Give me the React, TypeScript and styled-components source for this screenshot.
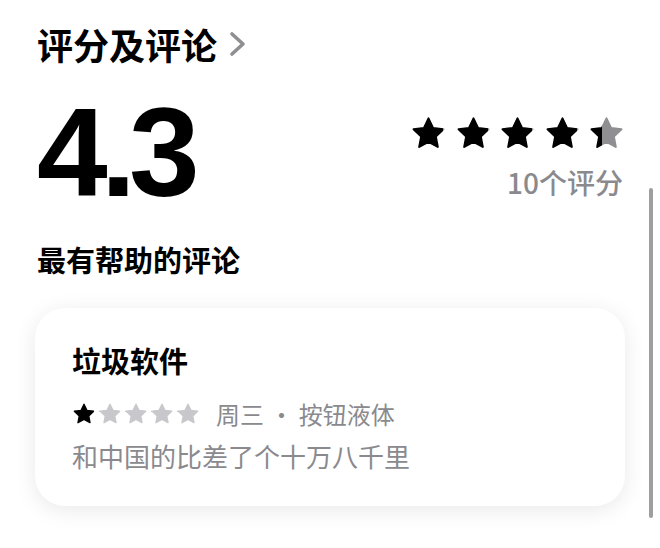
import React from "react";
import styled, { createGlobalStyle } from "styled-components";

const GlobalStyle = createGlobalStyle`
  html, body {
    margin: 0;
    padding: 0;
    background: #fff;
  }
  body {
    font-family: "Noto Sans CJK SC", "Noto Sans", sans-serif;
    color: #000;
  }
`;

const Page = styled.div`
  position: relative;
  width: 660px;
  height: 548px;
  overflow: hidden;
  box-sizing: border-box;
  padding: 22px 37px 0;
`;

const Header = styled.div`
  display: flex;
  align-items: center;
  gap: 12px;
  height: 44px;
`;

const Title = styled.h1`
  margin: 0;
  font-size: 36px;
  line-height: 44px;
  font-weight: 700;
`;

const Summary = styled.div`
  display: flex;
  justify-content: space-between;
  align-items: flex-start;
  margin-top: 23px;
`;

const BigScore = styled.div`
  font-family: "Liberation Sans", Arial, sans-serif;
  font-weight: 700;
  font-size: 127px;
  line-height: 1;
  letter-spacing: -7px;
`;

const RatingBox = styled.div`
  display: flex;
  flex-direction: column;
  align-items: flex-end;
  padding-top: 26px;
  margin-right: -2px;
`;

const StarRow = styled.div<{ $gap: number }>`
  display: flex;
  align-items: center;
  gap: ${(p) => p.$gap}px;
`;

const CountText = styled.div`
  margin-top: 15px;
  margin-right: 2px;
  font-size: 28px;
  line-height: 30px;
  font-weight: 500;
  color: #8a8a8e;
`;

const SectionTitle = styled.h2`
  margin: 25px 0 0;
  font-size: 29px;
  line-height: 36px;
  font-weight: 700;
`;

const Card = styled.div`
  margin-top: 31px;
  width: 590px;
  margin-left: -2px;
  box-sizing: border-box;
  padding: 34px 37px 34px;
  border-radius: 30px;
  background: #fff;
  box-shadow: 0 4px 22px rgba(0, 0, 0, 0.09);
`;

const ReviewTitle = styled.div`
  font-size: 29px;
  line-height: 36px;
  font-weight: 700;
`;

const MetaRow = styled.div`
  display: flex;
  align-items: center;
  gap: 16px;
  margin-top: 20px;
  height: 32px;
`;

const MetaText = styled.span`
  font-size: 24px;
  line-height: 32px;
  color: #8a8a8e;
`;

const Body = styled.div`
  margin-top: 10px;
  font-size: 26px;
  line-height: 32px;
  color: #8a8a8e;
`;

const ScrollIndicator = styled.div`
  position: absolute;
  left: 649px;
  top: 188px;
  width: 4px;
  height: 330px;
  border-radius: 2px;
  background: #9e9e9e;
`;

const STAR_PATH =
  "M12 2.2l2.95 6.2 6.75.85-4.95 4.7 1.28 6.75L12 17.4l-6.03 3.3 1.28-6.75-4.95-4.7 6.75-.85z";

type StarProps = { size: number; fill: number; on: string; off: string; id: string };

const Star = ({ size, fill, on, off, id }: StarProps) => (
  <svg width={size} height={size} viewBox="0 0 24 24">
    <defs>
      <linearGradient id={id} x1="0" x2="1" y1="0" y2="0">
        <stop offset={fill} stopColor={on} />
        <stop offset={fill} stopColor={off} />
      </linearGradient>
    </defs>
    <path d={STAR_PATH} fill={`url(#${id})`} stroke={`url(#${id})`} strokeWidth="1.3" strokeLinejoin="round" />
  </svg>
);

const Stars = ({ value, size, gap, on, off, prefix }: { value: number; size: number; gap: number; on: string; off: string; prefix: string }) => (
  <StarRow $gap={gap}>
    {[0, 1, 2, 3, 4].map((i) => {
      const f = Math.max(0, Math.min(1, value - i));
      const adj = f > 0 && f < 1 ? 0.12 + f * 0.76 : f;
      return <Star key={i} id={`${prefix}-${i}`} size={size} fill={adj} on={on} off={off} />;
    })}
  </StarRow>
);

export default function App() {
  return (
    <Page>
      <GlobalStyle />
      <Header>
        <Title>评分及评论</Title>
        <svg width="18" height="26" viewBox="0 0 18 26">
          <path d="M3 3l11 10L3 23" fill="none" stroke="#8e8e93" strokeWidth="3.6" strokeLinecap="round" strokeLinejoin="round" />
        </svg>
      </Header>
      <Summary>
        <BigScore>4.3</BigScore>
        <RatingBox>
          <Stars value={4.3} size={37} gap={7.5} on="#000" off="#8e8e93" prefix="big" />
          <CountText>10个评分</CountText>
        </RatingBox>
      </Summary>
      <SectionTitle>最有帮助的评论</SectionTitle>
      <Card>
        <ReviewTitle>垃圾软件</ReviewTitle>
        <MetaRow>
          <Stars value={1} size={24} gap={2} on="#000" off="#c7c7cc" prefix="small" />
          <MetaText>周三 · 按钮液体</MetaText>
        </MetaRow>
        <Body>和中国的比差了个十万八千里</Body>
      </Card>
      <ScrollIndicator />
    </Page>
  );
}
